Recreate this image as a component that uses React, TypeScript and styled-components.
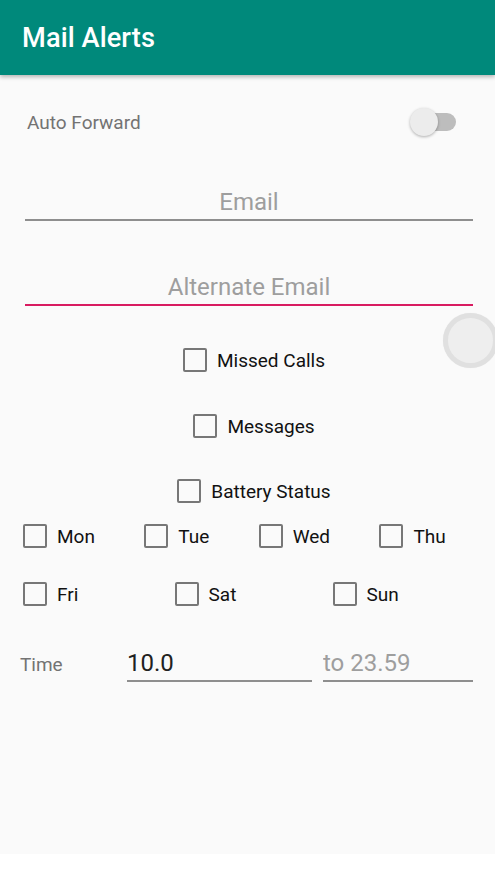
import React from "react";
import styled, { createGlobalStyle } from "styled-components";

const Global = createGlobalStyle`
  html, body { margin: 0; padding: 0; background: #ffffff; }
  body { font-family: Roboto, "Noto Sans", "Liberation Sans", sans-serif; }
  * { box-sizing: border-box; }
`;

const Page = styled.div`
  position: relative;
  min-height: 854px;
  background: #fafafa;
  display: flex;
  flex-direction: column;
  overflow: hidden;
`;

const AppBar = styled.header`
  height: 75px;
  background: #00897b;
  display: flex;
  align-items: center;
  padding-left: 22px;
  box-shadow: 0 2px 4px rgba(0, 0, 0, 0.28);
  position: relative;
  z-index: 1;
`;

const Title = styled.h1`
  margin: 0;
  color: #ffffff;
  font-size: 27.2px;
  font-weight: 500;
  letter-spacing: 0.1px;
`;

const ToggleRow = styled.div`
  margin-top: 27px;
  height: 40px;
  display: flex;
  align-items: center;
  justify-content: space-between;
  padding: 0 39px 0 27px;
`;

const MutedLabel = styled.span`
  font-size: 19px;
  color: #737373;
`;

const Switch = styled.div`
  position: relative;
  width: 46px;
  height: 28px;
`;

const Track = styled.div`
  position: absolute;
  left: 6px;
  right: 0;
  top: 5px;
  height: 18px;
  border-radius: 9px;
  background: #bdbdbd;
`;

const Thumb = styled.div`
  position: absolute;
  left: 0;
  top: 0;
  width: 28px;
  height: 28px;
  border-radius: 50%;
  background: #ececec;
  box-shadow: 0 1px 3px rgba(0, 0, 0, 0.3);
`;

const Field = styled.input<{ $accent?: boolean; $center?: boolean; $top: number }>`
  display: block;
  margin: ${(p) => p.$top}px 22px 0 25px;
  width: calc(100% - 47px);
  height: 36px;
  padding: 0;
  border: none;
  border-bottom: 2px solid ${(p) => (p.$accent ? "#d81b60" : "#8e8e8e")};
  background: transparent;
  font-family: inherit;
  font-size: 24px;
  color: #212121;
  text-align: ${(p) => (p.$center ? "center" : "left")};
  outline: none;
  &::placeholder { color: #9e9e9e; }
`;

const CenterRow = styled.div<{ $top: number }>`
  margin-top: ${(p) => p.$top}px;
  height: 40px;
  display: flex;
  justify-content: center;
  align-items: center;
  padding-left: 13px;
`;

const Check = styled.label`
  display: flex;
  align-items: center;
  gap: 10px;
  font-size: 19px;
  color: #111111;
`;

const Box = styled.span`
  width: 24px;
  height: 24px;
  border: 2.4px solid #777777;
  border-radius: 2px;
  flex: none;
`;

const DayRow = styled.div<{ $top: number }>`
  margin-top: ${(p) => p.$top}px;
  height: 40px;
  display: flex;
  align-items: center;
  padding-left: 23px;
`;

const DayItem = styled(Check)`
  flex: 1 1 auto;
`;

const TimeRow = styled.div`
  margin-top: 32px;
  display: flex;
  align-items: baseline;
  padding: 0 22px 0 20px;
  gap: 11px;
`;

const TimeLabel = styled(MutedLabel)`
  width: 96px;
  flex: none;
`;

const TimeField = styled.input<{ $grow: number }>`
  flex: ${(p) => p.$grow} 1 0;
  min-width: 0;
  height: 36px;
  padding: 0;
  border: none;
  border-bottom: 2px solid #8e8e8e;
  background: transparent;
  font-family: inherit;
  font-size: 24px;
  color: #212121;
  outline: none;
  &::placeholder { color: #9e9e9e; }
`;

const Ripple = styled.div`
  position: absolute;
  left: 443px;
  top: 313px;
  width: 55px;
  height: 55px;
  border-radius: 50%;
  background: #eeeeee;
  border: 5px solid #e0e0e0;
  box-shadow: 0 0 1px rgba(0, 0, 0, 0.08);
`;

const CheckBox = ({ label }: { label: string }) => (
  <Check>
    <Box />
    <span>{label}</span>
  </Check>
);

const Day = ({ label }: { label: string }) => (
  <DayItem>
    <Box />
    <span>{label}</span>
  </DayItem>
);

export default function App() {
  return (
    <>
      <Global />
      <Page>
        <AppBar>
          <Title>Mail Alerts</Title>
        </AppBar>
        <ToggleRow>
          <MutedLabel>Auto Forward</MutedLabel>
          <Switch>
            <Track />
            <Thumb />
          </Switch>
        </ToggleRow>
        <Field $top={43} $center placeholder="Email" />
        <Field $top={49} $center $accent placeholder="Alternate Email" />
        <CenterRow $top={34}>
          <CheckBox label="Missed Calls" />
        </CenterRow>
        <CenterRow $top={26}>
          <CheckBox label="Messages" />
        </CenterRow>
        <CenterRow $top={25}>
          <CheckBox label="Battery Status" />
        </CenterRow>
        <DayRow $top={5}>
          <Day label="Mon" />
          <Day label="Tue" />
          <Day label="Wed" />
          <Day label="Thu" />
        </DayRow>
        <DayRow $top={18}>
          <Day label="Fri" />
          <Day label="Sat" />
          <Day label="Sun" />
        </DayRow>
        <TimeRow>
          <TimeLabel>Time</TimeLabel>
          <TimeField $grow={185} defaultValue="10.0" />
          <TimeField $grow={150} placeholder="to 23.59" />
        </TimeRow>
        <Ripple />
      </Page>
    </>
  );
}
